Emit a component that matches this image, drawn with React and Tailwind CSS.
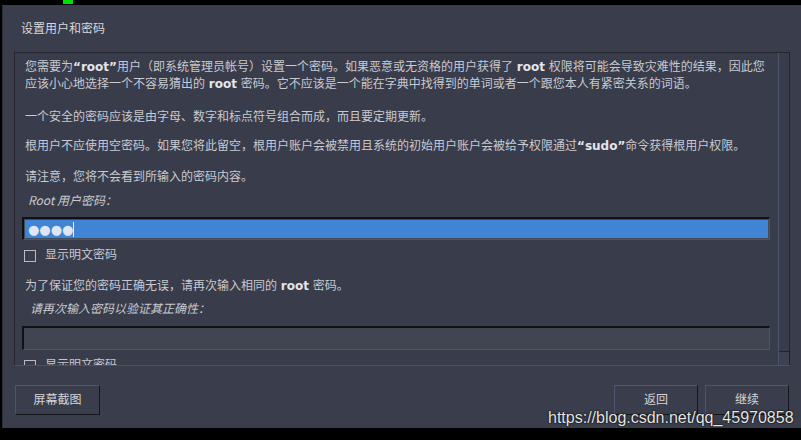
import { useState } from "react";

const ui = { fontFamily: '"DejaVu Sans", "Noto Sans CJK SC", sans-serif' };

function Checkbox({ label, checked, onChange }) {
  return (
    <label className="flex items-center h-[17px] ml-[2px] cursor-pointer">
      <span className="w-[12px] h-[12px] border border-[#b9bcc6] bg-[#3a3d4b] flex items-center justify-center">
        {checked && <span className="w-[6px] h-[6px] bg-[#c9cbd1]" />}
      </span>
      <input type="checkbox" className="hidden" checked={checked} onChange={onChange} />
      <span className="ml-[9px] text-[12px] text-[#c6c8cf]">{label}</span>
    </label>
  );
}

function Button({ children, className = "" }) {
  return (
    <button
      className={`h-[30px] border border-t-[#4b5570] border-l-[#4b5570] border-b-[#15161c] border-r-[#15161c] bg-[#3a3d4b] text-[12px] text-[#d2d4da] ${className}`}
    >
      {children}
    </button>
  );
}

export default function App() {
  const [showPw, setShowPw] = useState(false);
  const [showPw2, setShowPw2] = useState(false);

  return (
    <div className="w-[801px] h-[440px] bg-black flex flex-col overflow-hidden relative" style={ui}>
      {/* desktop strip behind the dialog */}
      <div className="h-[5px] shrink-0 relative">
        <div className="absolute left-[63px] top-0 w-[10px] h-[4px] bg-[#00e000]" />
      </div>

      {/* dialog */}
      <div className="h-[423px] ml-[2px] bg-[#3a3d4b] border-l border-[#2c2e39] flex flex-col">
        <div className="h-[47px] shrink-0 pl-[18px] pt-[17px] text-[12px] leading-[14px] text-[#d6d8de]">
          设置用户和密码
        </div>

        {/* scrolled content panel */}
        <div className="mx-[11px] h-[314px] shrink-0 flex border-t border-l border-[#25262f] border-b border-b-[#475270] bg-[#393c4a]">
          <div className="flex-1 overflow-hidden pl-[7px] pr-[8px] pt-[6px] text-[12px] leading-[17px] text-[#c8cad1]">
            <p className="ml-[3px]">
              您需要为<b className="text-[#e4e5ea]">“root”</b>用户（即系统管理员帐号）设置一个密码。如果恶意或无资格的用户获得了 <b className="text-[#e4e5ea]">root</b> 权限将可能会导致灾难性的结果，因此您应该小心地选择一个不容易猜出的 <b className="text-[#e4e5ea]">root</b> 密码。它不应该是一个能在字典中找得到的单词或者一个跟您本人有紧密关系的词语。
            </p>
            <p className="mt-[16px] ml-[3px]">一个安全的密码应该是由字母、数字和标点符号组合而成，而且要定期更新。</p>
            <p className="mt-[12px] ml-[3px]">
              根用户不应使用空密码。如果您将此留空，根用户账户会被禁用且系统的初始用户账户会被给予权限通过<b className="text-[#e4e5ea]">“sudo”</b>命令获得根用户权限。
            </p>
            <p className="mt-[14px] ml-[3px]">请注意，您将不会看到所输入的密码内容。</p>
            <p className="mt-[5px] ml-[6px] italic" style={{ fontFamily: '"Noto Sans CJK SC", sans-serif' }}>
              Root 用户密码：
            </p>

            <div className="mt-[9px] h-[23px] border-t-2 border-l-2 border-[#101116] border-b border-r border-b-[#4a5572] border-r-[#4a5572] bg-[#454a59] p-[1px]">
              <div className="h-full bg-[#4084d3] flex items-center pl-[3px] text-[#dde6f2] text-[13px] leading-[13px] tracking-[0px]">
                ●●●●<span className="w-[1px] h-[15px] bg-[#e8eef6]" />
              </div>
            </div>

            <div className="mt-[7px]">
              <Checkbox label="显示明文密码" checked={showPw} onChange={() => setShowPw(!showPw)} />
            </div>

            <p className="mt-[14px] ml-[3px]">
              为了保证您的密码正确无误，请再次输入相同的 <b className="text-[#e4e5ea]">root</b> 密码。
            </p>
            <p className="mt-[6px] ml-[8px] italic">请再次输入密码以验证其正确性：</p>

            <div className="mt-[8px] h-[24px] border-t-2 border-l-2 border-[#101116] border-b border-r border-b-[#4a5572] border-r-[#4a5572] bg-[#414551]" />

            <div className="mt-[7px]">
              <Checkbox label="显示明文密码" checked={showPw2} onChange={() => setShowPw2(!showPw2)} />
            </div>
          </div>

          {/* scrollbar */}
          <div className="w-[12px] shrink-0 flex flex-col border-l border-[#4a5572] border-r border-r-[#22232b]">
            <div className="flex-1 bg-[#393c4a]" />
            <div className="h-[14px] border-t border-[#22232b] bg-[#3d4150]" />
          </div>
        </div>

        {/* buttons */}
        <div className="mt-[19px] mx-[12px] flex">
          <Button className="w-[85px]">屏幕截图</Button>
          <div className="flex-1" />
          <Button className="w-[84px]">返回</Button>
          <Button className="w-[84px] ml-[7px]">继续</Button>
        </div>
      </div>

      {/* watermark */}
      <div
        className="absolute left-[548px] top-[408px] text-[16px] leading-[20px] text-[#e6e6e6] [text-shadow:0_0_2px_#000,0_0_1px_#000]"
        style={{ fontFamily: '"Liberation Sans", Arial, sans-serif' }}
      >
        https://blog.csdn.net/qq_45970858
      </div>
    </div>
  );
}
